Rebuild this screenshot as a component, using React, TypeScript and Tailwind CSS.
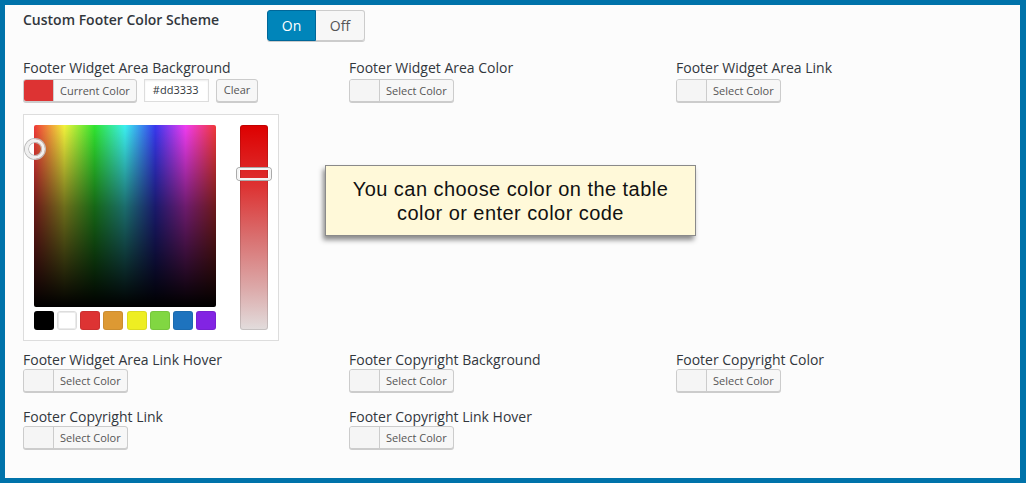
const SWATCHES = [
  "bg-[#000000]",
  "bg-[#ffffff] border border-[#dddddd]",
  "bg-[#dd3333]",
  "bg-[#dd9933]",
  "bg-[#eeee22]",
  "bg-[#81d742]",
  "bg-[#1e73be]",
  "bg-[#8224e3]",
];

function ColorButton({ label, swatch = "bg-[#f5f5f5]" }: { label: string; swatch?: string }) {
  return (
    <div className="flex h-[23px] w-max overflow-hidden rounded-[3px] border border-[#cccccc] bg-[#f7f7f7] shadow-[0_1px_0_#cccccc]">
      <span className={`w-[30px] border-r border-[#cccccc] ${swatch}`} />
      <span className="flex items-center px-[6px] text-[11px] leading-none text-[#555555]">{label}</span>
    </div>
  );
}

function Field({ label, children }: { label: string; children?: React.ReactNode }) {
  return (
    <div>
      <p className="text-[14px] leading-[19px]">{label}</p>
      {children ?? <ColorButton label="Select Color" />}
    </div>
  );
}

function Picker() {
  return (
    <div className="mt-[12px] flex w-[256px] justify-between border border-[#dddddd] bg-white p-[10px]">
      <div className="w-[182px]">
        <div className="relative h-[182px] w-[182px] rounded-[2px] [background-image:linear-gradient(to_bottom,rgba(0,0,0,0)_0%,rgba(0,0,0,0.55)_45%,#000000_100%),linear-gradient(to_right,#f03838,#f2f23c,#30e430,#3cf0f0,#3838ee,#f03cf0,#f03838)]">
          <span className="absolute left-[-9px] top-[14px] h-5 w-5 rounded-full border-[3px] border-[#f0f0f0] shadow-[0_0_0_1px_#bdbdbd,inset_0_0_0_1px_#bdbdbd]" />
        </div>
        <div className="mt-[4px] flex justify-between">
          {SWATCHES.map((s) => (
            <span key={s} className={`h-[19px] w-[20px] rounded-[3px] shadow-[inset_0_0_0_1px_rgba(0,0,0,0.08)] ${s}`} />
          ))}
        </div>
      </div>
      <div className="relative h-[205px] w-[28px] rounded-[3px] shadow-[inset_0_0_0_1px_rgba(0,0,0,0.12)] [background-image:linear-gradient(to_bottom,#dd0000_0%,#dd3333_30%,#d97070_55%,#dcaaaa_80%,#e2dddd_100%)]">
        <span className="absolute left-[-3px] top-[43px] h-[12px] w-[34px] rounded-[3px] border-2 border-[#f4f4f4] shadow-[0_0_0_1px_#aaaaaa]" />
      </div>
    </div>
  );
}

export default function App() {
  return (
    <div className="relative h-[483px] w-[1026px] border-[5px] border-r-[6px] border-[#0073aa] bg-[#fcfcfc] font-['Open_Sans',sans-serif] text-[#32373c]">
      <div className="flex pl-[18px] pt-[5px]">
        <p className="w-[244px] text-[14px] font-semibold leading-[19px]">Custom Footer Color Scheme</p>
        <div className="flex h-[31px] text-[14px] shadow-[0_1px_0_#cccccc] rounded-[3px]">
          <span className="flex w-[49px] items-center justify-center rounded-l-[3px] border border-[#006799] bg-[#0085ba] text-white">
            On
          </span>
          <span className="flex w-[49px] items-center justify-center rounded-r-[3px] border border-l-0 border-[#cccccc] bg-[#f7f7f7] text-[#555555]">
            Off
          </span>
        </div>
      </div>

      <div className="mt-[17px] grid grid-cols-[326px_327px_1fr] pl-[18px]">
        <div>
          <p className="text-[14px] leading-[19px]">Footer Widget Area Background</p>
          <div className="mt-[2px] flex gap-[7px]">
            <ColorButton label="Current Color" swatch="bg-[#dd3333]" />
            <div className="flex h-[23px] w-[65px] items-center border border-[#dddddd] bg-white pl-[8px] text-[11px] text-[#32373c] shadow-[inset_0_1px_2px_rgba(0,0,0,0.07)]">
              #dd3333
            </div>
            <div className="flex h-[23px] items-center rounded-[3px] border border-[#cccccc] bg-[#f7f7f7] px-[7px] text-[11px] text-[#555555] shadow-[0_1px_0_#cccccc]">
              Clear
            </div>
          </div>
          <Picker />
        </div>
        <div>
          <p className="text-[14px] leading-[19px]">Footer Widget Area Color</p>
          <div className="mt-[2px]">
            <ColorButton label="Select Color" />
          </div>
        </div>
        <div>
          <p className="text-[14px] leading-[19px]">Footer Widget Area Link</p>
          <div className="mt-[2px]">
            <ColorButton label="Select Color" />
          </div>
        </div>
      </div>

      <div className="mt-[9px] grid grid-cols-[326px_327px_1fr] pl-[18px]">
        <Field label="Footer Widget Area Link Hover" />
        <Field label="Footer Copyright Background" />
        <Field label="Footer Copyright Color" />
      </div>

      <div className="mt-[15px] grid grid-cols-[326px_327px_1fr] pl-[18px]">
        <Field label="Footer Copyright Link" />
        <Field label="Footer Copyright Link Hover" />
      </div>

      <div className="absolute left-[320px] top-[160px] flex h-[71px] w-[371px] items-center justify-center border border-[#8a8a8a] bg-[#fff9d9] text-center font-['Liberation_Sans',Arial,sans-serif] text-[20px] leading-[24px] tracking-[0.45px] text-[#111111] shadow-[-2px_4px_5px_rgba(0,0,0,0.45)]">
        <p>
          You can choose color on the table
          <br />
          color or enter color code
        </p>
      </div>
    </div>
  );
}
